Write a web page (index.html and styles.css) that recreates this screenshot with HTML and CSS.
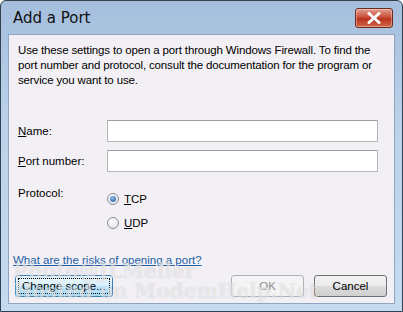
FILE: index.html
```html
<!DOCTYPE html>
<html lang="en">

<head>
  <meta charset="UTF-8">
  <title>Add a Port</title>
  <link rel="stylesheet" href="styles.css">
</head>

<body>
  <div class="window">
    <div class="titlebar">
      <span class="title">Add a Port</span>
      <button class="close" aria-label="Close">
        <svg width="14" height="12" viewBox="0 0 14 12">
          <path d="M2 1.5 L12 10.5 M12 1.5 L2 10.5" stroke="#fff" stroke-width="3" stroke-linecap="round" />
        </svg>
      </button>
    </div>

    <div class="client">
      <p class="intro">Use these settings to open a port through Windows Firewall. To find the port number and protocol, consult the documentation for the program or service you want to use.</p>

      <div class="row">
        <label class="label"><u>N</u>ame:</label>
        <input class="field" type="text">
      </div>
      <div class="row">
        <label class="label"><u>P</u>ort number:</label>
        <input class="field" type="text">
      </div>

      <div class="protocol">
        <span class="label">Protocol:</span>
        <div class="radios">
          <label class="radio"><span class="dot is-checked"></span><span><u>T</u>CP</span></label>
          <label class="radio"><span class="dot"></span><span><u>U</u>DP</span></label>
        </div>
      </div>

      <a class="link" href="#">What are the risks of opening a port?</a>

      <div class="buttons">
        <button class="btn is-focus">Change scope...</button>
        <span class="spacer"></span>
        <button class="btn is-disabled">OK</button>
        <button class="btn">Cancel</button>
      </div>

      <div class="watermark">
        <div>Photo@JLMeller</div>
        <div class="wm2">Hosted on ModemHelp.Net</div>
      </div>
    </div>
  </div>
</body>

</html>
```

FILE: styles.css
```css
body {
  margin: 0;
  font-family: "Liberation Sans", Arial, sans-serif;
  font-size: 11.5px;
  color: #000;
}

.window {
  width: 403px;
  height: 312px;
  box-sizing: border-box;
  border: 1px solid #33404f;
  border-radius: 6px 6px 0 0;
  background: linear-gradient(to bottom, #a4bedc, #bcd2ea 40%, #c6daef);
  padding: 0 7px 7px 7px;
  display: flex;
  flex-direction: column;
}

.titlebar {
  height: 33px;
  display: flex;
  align-items: center;
}

.title {
  font-family: "DejaVu Sans", sans-serif;
  font-size: 15px;
  padding-left: 5px;
  flex: 1;
  color: #111;
}

.close {
  width: 38px;
  height: 20px;
  margin-right: 2px;
  border: 1px solid #6e2a20;
  border-radius: 3px;
  background: linear-gradient(to bottom, #e2a090, #c9503a 45%, #b8321c 55%, #d06a48);
  box-shadow: inset 0 0 0 1px rgba(255, 255, 255, 0.35);
  display: flex;
  align-items: center;
  justify-content: center;
  padding: 0;
}

.client {
  flex: 1;
  position: relative;
  border: 1px solid #8ea6c2;
  background: #f3f0f5;
  padding: 0 7px 6px 9px;
  display: flex;
  flex-direction: column;
}

.intro {
  margin: 8px 0 0 0;
  line-height: 15px;
  letter-spacing: -0.15px;
}

.row {
  display: flex;
  align-items: center;
  margin-top: 8px;
}

.row:first-of-type {
  margin-top: 32px;
}

.label {
  width: 89px;
}

.field {
  width: 271px;
  height: 22px;
  box-sizing: border-box;
  border: 1px solid #b5b5b5;
  border-top-color: #a0a0a0;
  background: #fff;
  margin: 0;
}

.protocol {
  display: flex;
  margin-top: 15px;
}

.radios {
  display: flex;
  flex-direction: column;
  gap: 12px;
  padding-top: 6px;
}

.radio {
  display: flex;
  align-items: center;
  gap: 5px;
}

.dot {
  width: 12px;
  height: 12px;
  border-radius: 50%;
  border: 1px solid #8a8f96;
  background: radial-gradient(circle at 40% 35%, #fff, #dadde2);
  box-sizing: border-box;
  position: relative;
}

.dot.is-checked::after {
  content: "";
  position: absolute;
  left: 2px;
  top: 2px;
  width: 6px;
  height: 6px;
  border-radius: 50%;
  background: radial-gradient(circle at 40% 35%, #8cc0ee, #1f4f8c);
}

.link {
  margin-top: auto;
  margin-left: -5px;
  color: #1f5fa6;
  text-decoration: underline;
}

.buttons {
  display: flex;
  gap: 10px;
  margin-top: 9px;
  margin-left: -3px;
}

.spacer {
  flex: 1;
}

.btn {
  height: 22px;
  min-width: 73px;
  font-family: inherit;
  font-size: 11.5px;
  border: 1px solid #707070;
  border-radius: 3px;
  background: linear-gradient(to bottom, #f2f2f2, #ebebeb 50%, #dddddd 51%, #cfcfcf);
  padding: 0 6px;
  color: #000;
}

.btn.is-focus {
  border-color: #3c7fb1;
  background: linear-gradient(to bottom, #eaf6fd, #d9f0fc 50%, #bee6fd 51%, #a7d9f5);
  outline: 1px dotted #000;
  outline-offset: -4px;
}

.btn.is-disabled {
  color: #8c8c8c;
  border-color: #adb2b5;
  background: #f4f4f4;
}

.watermark {
  position: absolute;
  left: 4px;
  bottom: 2px;
  font-family: "DejaVu Serif", serif;
  font-weight: bold;
  font-size: 20px;
  line-height: 20px;
  color: rgba(255, 255, 255, 0.5);
  text-shadow: 0 0 1px rgba(120, 120, 120, 0.3);
  pointer-events: none;
}
```
